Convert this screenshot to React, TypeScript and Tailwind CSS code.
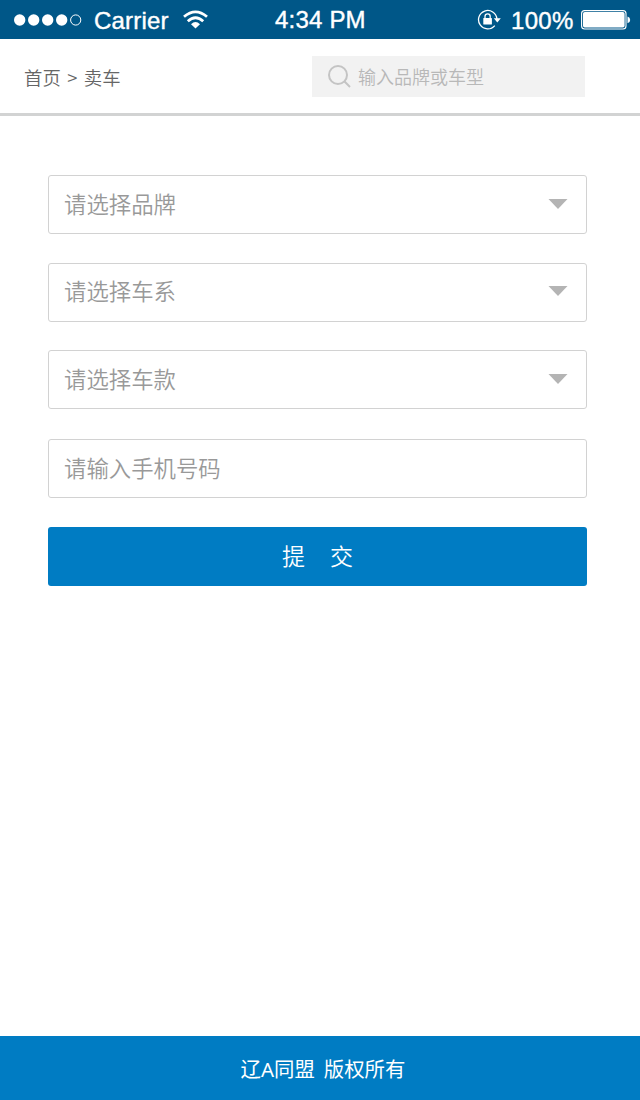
import React, { useState } from 'react';

const StatusBar: React.FC = () => {
    return (
        <div className="h-[39px] bg-[#005788] text-white flex items-center font-['Liberation_Sans',sans-serif] text-2xl leading-none [-webkit-text-stroke:0.4px_white]">
            <div className="w-[275px] flex items-center pl-[14px]">
                <svg width="68" height="12" viewBox="0 0 68 12" fill="white">
                    <circle cx="5.7" cy="6" r="5.7" />
                    <circle cx="19.7" cy="6" r="5.7" />
                    <circle cx="33.7" cy="6" r="5.7" />
                    <circle cx="47.7" cy="6" r="5.7" />
                    <circle cx="61.7" cy="6" r="5.1" fill="none" stroke="white" strokeWidth="1" />
                </svg>
                <span className="ml-3 w-[76px] pt-[2px] tracking-[0.2px]">Carrier</span>
                <svg className="ml-[13px]" width="25" height="19" viewBox="0 0 25 19" fill="none" stroke="white" strokeWidth="2.8">
                    <path d="M1 6.8 Q12.5 -3 24 6.8" />
                    <path d="M4.8 11.2 Q12.5 4.3 20.2 11.2" />
                    <path d="M8 14.2 Q12.5 10 17 14.2 L12.5 18.6 Z" fill="white" stroke="none" />
                </svg>
            </div>
            <span className="w-[202px] tracking-[0.2px]">4:34 PM</span>
            <svg width="25" height="22" viewBox="0 0 25 22" fill="none" stroke="white" strokeWidth="1.3">
                <path d="M19.9 10 A9.2 9.2 0 1 0 17.8 16.6" />
                <path d="M16.8 9.2 H23.8 L20.3 13.6 Z" fill="white" stroke="none" />
                <rect x="6.3" y="9" width="8.6" height="6.4" rx="0.5" fill="white" stroke="none" />
                <path d="M8 10 V7.5 A2.6 2.6 0 0 1 13.2 7.5 V10" />
            </svg>
            <span className="ml-[9px] w-[70px] pt-[2px] tracking-[0.3px]">100%</span>
            <svg width="50" height="20" viewBox="0 0 50 20" fill="white">
                <rect x="0.6" y="0.6" width="44.4" height="18.4" rx="3" fill="none" stroke="white" strokeWidth="1.1" />
                <rect x="2" y="2" width="41.6" height="15.6" rx="1.8" />
                <path d="M46.5 6.5 Q49.2 7.2 49.2 9.9 Q49.2 12.6 46.5 13.3 Z" />
            </svg>
        </div>
    );
};

const SelectField: React.FC<{ label: string; className?: string }> = ({ label, className = '' }) => {
    return (
        <button
            type="button"
            className={`w-full h-[59px] border border-[#d2d2d2] rounded-[3px] pl-[15px] pr-[18px] flex items-center justify-between text-[22.4px] text-[#999] ${className}`}
        >
            <span className="pb-px">{label}</span>
            <svg width="20" height="10" viewBox="0 0 20 10" fill="#b4b4b4" className="mb-[2px]">
                <path d="M0.5 0 H19.5 L10 10 Z" />
            </svg>
        </button>
    );
};

export default function App() {
    const [keyword, setKeyword] = useState('');
    const [phone, setPhone] = useState('');

    return (
        <div className="w-[640px] h-[1100px] bg-white flex flex-col overflow-hidden font-['Noto_Sans_CJK_SC',sans-serif] font-[350]">
            <StatusBar />
            <header className="h-[77px] border-b-3 border-[#d2d3d3] pl-6 pr-[55px] flex items-center justify-between">
                <nav className="flex items-center pt-[3px] text-[18.4px] text-[#666]">
                    <span>首页</span>
                    <span className="w-[23px] text-center">&gt;</span>
                    <span>卖车</span>
                </nav>
                <div className="w-[273px] h-[41px] bg-[#f2f2f2] flex items-center pl-4">
                    <svg className="mt-px" width="23" height="23" viewBox="0 0 23 23" fill="none" stroke="#c4c4c4" strokeWidth="2">
                        <circle cx="10" cy="10" r="9" />
                        <path d="M16.3 16.3 L22 22" />
                    </svg>
                    <input
                        type="text"
                        value={keyword}
                        onChange={(e) => setKeyword(e.target.value)}
                        placeholder="输入品牌或车型"
                        className="ml-[7px] w-[200px] bg-transparent text-lg outline-none placeholder:text-[#b8b8b8]"
                    />
                </div>
            </header>
            <form className="flex-1 pt-[59px] pl-12 pr-[53px]" onSubmit={(e) => e.preventDefault()}>
                <SelectField label="请选择品牌" />
                <SelectField label="请选择车系" className="mt-[29px] pb-[2px]" />
                <SelectField label="请选择车款" className="mt-[28px]" />
                <input
                    type="tel"
                    value={phone}
                    onChange={(e) => setPhone(e.target.value)}
                    placeholder="请输入手机号码"
                    className="block mt-[30px] w-full h-[59px] border border-[#d2d2d2] rounded-[3px] px-[15px] pb-[3px] text-[22.4px] outline-none placeholder:text-[#999]"
                />
                <button
                    type="submit"
                    className="mt-[29px] w-full h-[59px] bg-[#007cc3] rounded-[3px] pb-[2px] flex items-center justify-center gap-[25px] text-[23px] text-white"
                >
                    <span>提</span>
                    <span>交</span>
                </button>
            </form>
            <footer className="h-16 bg-[#007cc3] flex items-center justify-center pl-[6px] text-[20.4px] font-normal text-white">
                <p className="flex items-baseline gap-[9px]">
                    <span>辽<span className="font-['Noto_Sans',sans-serif] leading-none">A</span>同盟</span>
                    <span>版权所有</span>
                </p>
            </footer>
        </div>
    );
}
